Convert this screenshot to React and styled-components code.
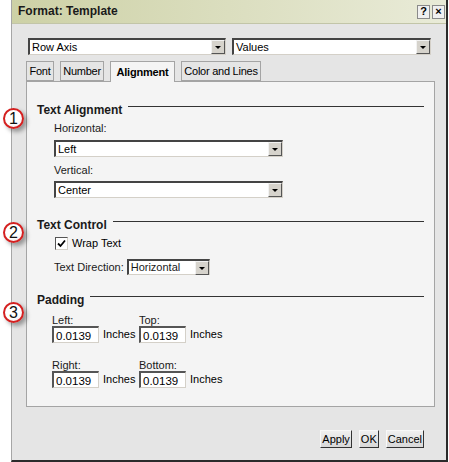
import React from "react";
import styled, { createGlobalStyle } from "styled-components";

const GlobalStyle = createGlobalStyle`
  html, body { margin: 0; padding: 0; background: #fff; }
  body { font-family: "Liberation Sans", Arial, sans-serif; font-size: 11px; line-height: 13px; color: #000; }
`;

const Page = styled.div`
  position: relative;
  width: 449px;
  height: 462px;
  padding-left: 11px;
  box-sizing: border-box;
`;

const Dialog = styled.div`
  width: 437px;
  height: 462px;
  box-sizing: border-box;
  background: #e5e5e5;
  border-left: 1px solid #a6a6a6;
  border-right: 2px solid #2b2b2b;
  border-bottom: 2px solid #2b2b2b;
  display: flex;
  flex-direction: column;
`;

const TitleBar = styled.div`
  height: 24px;
  box-sizing: border-box;
  display: flex;
  align-items: center;
  justify-content: space-between;
  padding: 0 1px 0 6px;
  background: linear-gradient(to right, #cdd1a6, #e9ebd8);
  border-bottom: 1px solid #c2c5a8;
`;

const Title = styled.div`
  font-weight: bold;
  font-size: 12px;
  color: #1a1a1a;
`;

const TitleButtons = styled.div`
  display: flex;
  gap: 2px;
`;

const TitleButton = styled.div`
  width: 13px;
  height: 14px;
  box-sizing: border-box;
  background: #f0f0f0;
  border: 1px solid #8a8a8a;
  display: flex;
  align-items: center;
  justify-content: center;
  font-weight: bold;
  font-size: 11px;
  line-height: 1;
`;

const Body = styled.div`
  flex: 1;
  display: flex;
  flex-direction: column;
  padding: 14px 11px 0 14px;
`;

const TopRow = styled.div`
  display: flex;
  gap: 6px;
  padding-left: 2px;
`;

const SelectBox = styled.div`
  width: ${(p) => p.$w}px;
  height: ${(p) => p.$h || 17}px;
  flex: none;
  box-sizing: border-box;
  background: #fff;
  border-top: 2px solid #444;
  border-left: 2px solid #444;
  border-right: 1px solid #d4d0c8;
  border-bottom: 1px solid #d4d0c8;
  display: flex;
  align-items: center;
  justify-content: space-between;
  font-size: 11px;
`;

const SelectText = styled.span`
  padding-left: 2px;
  white-space: nowrap;
`;

const Arrow = styled.div`
  width: 14px;
  height: 14px;
  box-sizing: border-box;
  background: #d6d3cc;
  border-top: 1px solid #f2f2f2;
  border-left: 1px solid #f2f2f2;
  border-right: 1px solid #555;
  border-bottom: 1px solid #555;
  display: flex;
  align-items: center;
  justify-content: center;
  &::after {
    content: "";
    border-left: 3px solid transparent;
    border-right: 3px solid transparent;
    border-top: 3px solid #000;
    margin-top: 1px;
  }
`;

const Select = ({ value, w, h }) => (
  <SelectBox $w={w} $h={h}>
    <SelectText>{value}</SelectText>
    <Arrow />
  </SelectBox>
);

const Tabs = styled.div`
  display: flex;
  gap: 6px;
  margin-top: 6px;
  position: relative;
  z-index: 1;
`;

const Tab = styled.div`
  width: ${(p) => p.$w}px;
  height: ${(p) => (p.$active ? 21 : 20)}px;
  box-sizing: border-box;
  display: flex;
  align-items: center;
  justify-content: center;
  white-space: nowrap;
  border: 1px solid #a4a4a4;
  border-bottom: ${(p) => (p.$active ? "none" : "1px solid #a4a4a4")};
  background: ${(p) => (p.$active ? "#f4f4f4" : "#e5e5e5")};
  font-weight: ${(p) => (p.$active ? "bold" : "normal")};
  font-size: 11px;
  letter-spacing: ${(p) => (p.$active ? "-0.2px" : "-0.25px")};
  margin-bottom: ${(p) => (p.$active ? -1 : 0)}px;
`;

const Panel = styled.div`
  height: 326px;
  box-sizing: border-box;
  background: #f4f4f4;
  border: 1px solid #a4a4a4;
  padding: 21px 10px 0 10px;
  display: flex;
  flex-direction: column;
`;

const Section = styled.div`
  display: flex;
  flex-direction: column;
  margin-top: ${(p) => p.$mt || 0}px;
`;

const Legend = styled.div`
  display: flex;
  align-items: center;
  gap: 6px;
  font-weight: bold;
  font-size: 12px;
  line-height: 14px;
  color: #1a1a1a;
  &::after {
    content: "";
    flex: 1;
    height: 1px;
    background: #333;
    transform: translateY(-4px);
  }
`;

const Indent = styled.div`
  display: flex;
  flex-direction: column;
  padding-left: ${(p) => p.$pl || 17}px;
`;

const Label = styled.div`
  color: #1a1a1a;
  line-height: ${(p) => p.$lh || 13}px;
  margin-top: ${(p) => p.$mt || 0}px;
  margin-bottom: ${(p) => p.$mb || 0}px;
`;

const CheckRow = styled.label`
  display: flex;
  align-items: center;
  gap: 4px;
  margin-top: 5px;
  height: 13px;
`;

const CheckBox = styled.span`
  width: 13px;
  height: 13px;
  box-sizing: border-box;
  background: #fff;
  border-top: 1px solid #555;
  border-left: 1px solid #555;
  border-right: 1px solid #d4d0c8;
  border-bottom: 1px solid #d4d0c8;
  display: flex;
  align-items: center;
  justify-content: center;
`;

const DirectionRow = styled.div`
  display: flex;
  align-items: center;
  gap: 3px;
  margin-top: 9px;
  color: #1a1a1a;
`;

const PadGrid = styled.div`
  display: grid;
  grid-template-columns: 87px 120px;
  row-gap: 16px;
  margin-top: 7px;
  padding-left: 15px;
`;

const PadField = styled.div`
  display: flex;
  flex-direction: column;
`;

const PadLine = styled.div`
  display: flex;
  align-items: center;
  gap: 4px;
`;

const NumInput = styled.div`
  width: 47px;
  height: 17px;
  box-sizing: border-box;
  background: #fff;
  border-top: 2px solid #555;
  border-left: 2px solid #555;
  border-right: 1px solid #d4d0c8;
  border-bottom: 1px solid #d4d0c8;
  padding: 2px 0 0 2px;
  font-size: 11.5px;
  line-height: 13px;
`;

const Footer = styled.div`
  display: flex;
  justify-content: flex-end;
  gap: 7px;
  padding: 23px 11px 0 0;
`;

const Button = styled.div`
  height: 18px;
  box-sizing: border-box;
  padding: 0 1px;
  display: flex;
  align-items: center;
  background: linear-gradient(#f0f0f0, #d8d8d8);
  border-top: 1px solid #f8f8f8;
  border-left: 1px solid #f8f8f8;
  border-right: 1px solid #333;
  border-bottom: 1px solid #333;
`;

const Callout = styled.div`
  position: absolute;
  left: 3px;
  top: ${(p) => p.$top}px;
  width: 21px;
  height: 21px;
  box-sizing: border-box;
  border-radius: 50%;
  border: 2px solid #d42020;
  background: radial-gradient(circle at 40% 35%, #fff 55%, #f0dede);
  box-shadow: 3px 3px 4px rgba(0, 0, 0, 0.35);
  display: flex;
  align-items: center;
  justify-content: center;
  font-size: 16px;
  color: #111;
  z-index: 2;
`;

const Check = () => (
  <svg width="9" height="9" viewBox="0 0 9 9">
    <path d="M1 4.5 L3.5 7 L8 1.5" stroke="#000" strokeWidth="1.8" fill="none" />
  </svg>
);

const PadItem = ({ label, value }) => (
  <PadField>
    <Label $lh={12}>{label}</Label>
    <PadLine>
      <NumInput>{value}</NumInput>
      <span>Inches</span>
    </PadLine>
  </PadField>
);

export default function App() {
  return (
    <Page>
      <GlobalStyle />
      <Dialog>
        <TitleBar>
          <Title>Format: Template</Title>
          <TitleButtons>
            <TitleButton>?</TitleButton>
            <TitleButton>×</TitleButton>
          </TitleButtons>
        </TitleBar>
        <Body>
          <TopRow>
            <Select value="Row Axis" w={198} />
            <Select value="Values" w={199} />
          </TopRow>
          <Tabs>
            <Tab $w={28}>Font</Tab>
            <Tab $w={44}>Number</Tab>
            <Tab $w={65} $active>Alignment</Tab>
            <Tab $w={80}>Color and Lines</Tab>
          </Tabs>
          <Panel>
            <Section>
              <Legend>Text Alignment</Legend>
              <Indent>
                <Label $mt={5} $mb={5}>Horizontal:</Label>
                <Select value="Left" w={229} />
                <Label $mt={7} $mb={4}>Vertical:</Label>
                <Select value="Center" w={229} />
              </Indent>
            </Section>
            <Section $mt={20}>
              <Legend>Text Control</Legend>
              <Indent $pl={18}>
                <CheckRow>
                  <CheckBox><Check /></CheckBox>
                  Wrap Text
                </CheckRow>
              </Indent>
              <Indent>
                <DirectionRow>
                  Text Direction:
                  <Select value="Horizontal" w={83} h={16} />
                </DirectionRow>
              </Indent>
            </Section>
            <Section $mt={18}>
              <Legend>Padding</Legend>
              <PadGrid>
                <PadItem label="Left:" value="0.0139" />
                <PadItem label="Top:" value="0.0139" />
                <PadItem label="Right:" value="0.0139" />
                <PadItem label="Bottom:" value="0.0139" />
              </PadGrid>
            </Section>
          </Panel>
          <Footer>
            <Button>Apply</Button>
            <Button>OK</Button>
            <Button>Cancel</Button>
          </Footer>
        </Body>
      </Dialog>
      <Callout $top={108}>1</Callout>
      <Callout $top={222}>2</Callout>
      <Callout $top={302}>3</Callout>
    </Page>
  );
}
